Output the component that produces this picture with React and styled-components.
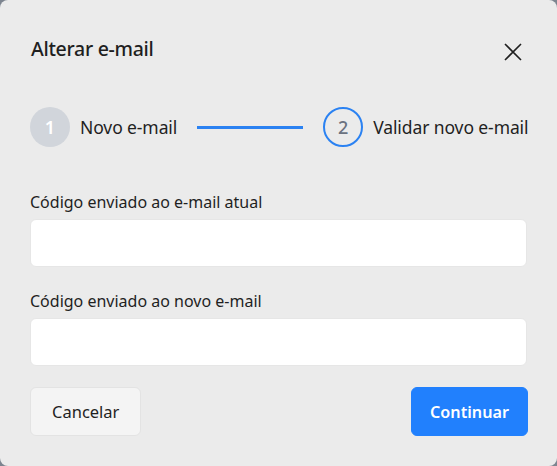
import React from "react";
import styled, { createGlobalStyle } from "styled-components";

const Global = createGlobalStyle`
  html, body { margin: 0; padding: 0; height: 100%; background: #7d8590; }
  #root { height: 100%; }
  * { box-sizing: border-box; }
`;

const Modal = styled.div`
  width: 557px;
  height: 466px;
  background: #ebebeb;
  border-radius: 8px;
  padding: 30px 29px 0 30px;
  font-family: "Noto Sans", "Segoe UI", sans-serif;
  color: #1f1f1f;
  display: flex;
  flex-direction: column;
`;

const Header = styled.div`
  display: flex;
  align-items: center;
  justify-content: space-between;
  height: 36px;
`;

const Title = styled.h2`
  margin: 0 0 0 1px;
  font-size: 19.5px;
  font-weight: 500;
  letter-spacing: -0.3px;
`;

const Close = styled.button`
  border: 0;
  background: none;
  padding: 0;
  margin-right: 6px;
  margin-top: 8px;
  display: flex;
  color: #1f1f1f;
`;

const Stepper = styled.div`
  display: flex;
  align-items: center;
  margin-top: 41px;
  white-space: nowrap;
  & > * { flex-shrink: 0; }
`;

const Circle = styled.div`
  width: 40px;
  height: 40px;
  border-radius: 50%;
  display: flex;
  align-items: center;
  justify-content: center;
  font-size: 18px;
  font-weight: ${(p) => (p.$active ? 500 : 600)};
  background: ${(p) => (p.$active ? "transparent" : "#d1d5db")};
  color: ${(p) => (p.$active ? "#6b7280" : "#ffffff")};
  border: ${(p) => (p.$active ? "2px solid #2b82f2" : "none")};
`;

const StepLabel = styled.span`
  font-size: 17.5px;
  margin-left: 10px;
  letter-spacing: -0.1px;
`;

const Line = styled.div`
  width: 106px;
  height: 3px;
  background: #2b82f2;
  margin: 0 20px 0 20px;
`;

const Field = styled.div`
  display: flex;
  flex-direction: column;
  margin-top: ${(p) => p.$top}px;
`;

const Label = styled.label`
  font-size: 16px;
  margin-bottom: 6px;
  line-height: 22px;
`;

const Input = styled.input`
  height: 48px;
  width: 497px;
  border: 1px solid #e6e6e6;
  border-radius: 6px;
  background: #ffffff;
  outline: none;
`;

const Footer = styled.div`
  display: flex;
  justify-content: space-between;
  margin-top: 21px;
`;

const Button = styled.button`
  height: 49px;
  padding: 0 ${(p) => (p.$primary ? 18 : 21)}px;
  font-family: inherit;
  font-size: ${(p) => (p.$primary ? 16.2 : 16.5)}px;
  font-weight: ${(p) => (p.$primary ? 600 : 400)};
  border-radius: 6px;
  border: 1px solid ${(p) => (p.$primary ? "#2180fd" : "#e3e3e3")};
  background: ${(p) => (p.$primary ? "#2180fd" : "#f4f4f4")};
  color: ${(p) => (p.$primary ? "#ffffff" : "#1f1f1f")};
`;

export default function App() {
  return (
    <>
      <Global />
      <Modal>
        <Header>
          <Title>Alterar e-mail</Title>
          <Close aria-label="Fechar">
            <svg width="18" height="18" viewBox="0 0 18 18" fill="none" stroke="currentColor" strokeWidth="1.6">
              <path d="M1 1L17 17M17 1L1 17" />
            </svg>
          </Close>
        </Header>
        <Stepper>
          <Circle>1</Circle>
          <StepLabel>Novo e-mail</StepLabel>
          <Line />
          <Circle $active>2</Circle>
          <StepLabel>Validar novo e-mail</StepLabel>
        </Stepper>
        <Field $top={44}>
          <Label>Código enviado ao e-mail atual</Label>
          <Input />
        </Field>
        <Field $top={23}>
          <Label>Código enviado ao novo e-mail</Label>
          <Input />
        </Field>
        <Footer>
          <Button>Cancelar</Button>
          <Button $primary>Continuar</Button>
        </Footer>
      </Modal>
    </>
  );
}
